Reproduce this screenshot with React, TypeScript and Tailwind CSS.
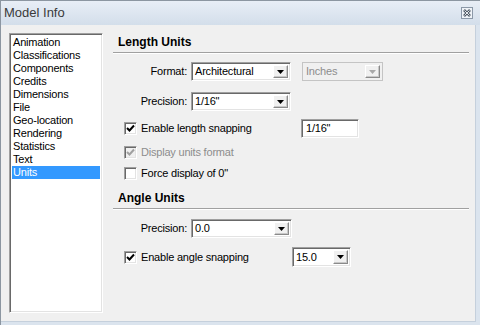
const sunken =
  'border border-t-[#a0a0a0] border-l-[#a0a0a0] border-r-white border-b-white shadow-[inset_1px_1px_0_#696969,inset_-1px_-1px_0_#e3e3e3]'

const ITEMS = [
  'Animation',
  'Classifications',
  'Components',
  'Credits',
  'Dimensions',
  'File',
  'Geo-location',
  'Rendering',
  'Statistics',
  'Text',
  'Units',
]

function ArrowButton({ disabled }: { disabled?: boolean }) {
  return (
    <div className="w-[15px] h-full flex items-center justify-center bg-[#f0f0f0] border border-t-white border-l-white border-r-[#8a8a8a] border-b-[#8a8a8a] shadow-[inset_-1px_-1px_0_#c8c8c8]">
      <svg width="7" height="4" viewBox="0 0 7 4">
        <path d="M0 0h7L3.5 4z" fill={disabled ? '#a8a8a8' : '#000'} />
      </svg>
    </div>
  )
}

function Select({
  value,
  width,
  height = 19,
  disabled,
}: {
  value: string
  width: string
  height?: number
  disabled?: boolean
}) {
  return (
    <div
      className={`${width} flex items-stretch p-[2px] ${
        disabled ? 'border border-[#c4c4c4] bg-[#f0f0f0] text-[#8d8d8d]' : `${sunken} bg-white text-black`
      }`}
      style={{ height }}
    >
      <div className="flex-1 flex items-center pl-[1px] overflow-hidden whitespace-nowrap">{value}</div>
      <ArrowButton disabled={disabled} />
    </div>
  )
}

function Checkbox({ checked, disabled }: { checked?: boolean; disabled?: boolean }) {
  return (
    <div
      className={`w-[13px] h-[13px] shrink-0 flex items-center justify-center ${sunken} ${
        disabled ? 'bg-[#f0f0f0]' : 'bg-white'
      }`}
    >
      {checked && (
        <svg width="9" height="9" viewBox="0 0 9 9">
          <path
            d="M1 4 L3.5 6.5 L8 1.5"
            fill="none"
            stroke={disabled ? '#a0a0a0' : '#000'}
            strokeWidth="2"
          />
        </svg>
      )}
    </div>
  )
}

function CloseButton() {
  return (
    <div className="w-[12px] h-[12px] border border-[#8b98a8] bg-[#eef2f7] flex items-center justify-center">
      <svg width="8" height="8" viewBox="0 0 8 8">
        <path d="M1 1 L7 7 M7 1 L1 7" stroke="#4f5a66" strokeWidth="2.6" />
        <path d="M1.5 1.5 L6.5 6.5 M6.5 1.5 L1.5 6.5" stroke="#f4f6f9" strokeWidth="0.9" />
      </svg>
    </div>
  )
}

function SectionHeading({ children }: { children: string }) {
  return (
    <div>
      <div className="h-[16px] leading-[16px] pl-[5px] text-[12px] font-bold text-black tracking-normal">
        {children}
      </div>
      <div className="mt-[2px] h-[1px] bg-[#a0a0a0] shadow-[0_1px_0_#fff]" />
    </div>
  )
}

export default function App() {
  return (
    <div className="w-[480px] h-[325px] flex flex-col border-l border-t border-[#8c96a1] bg-[#dbe4ee] font-['Liberation_Sans',Arial,sans-serif] text-[11px] tracking-[-0.2px] text-black select-none">
      {/* Title bar */}
      <div className="h-[24px] shrink-0 flex items-center justify-between pl-[3px] pr-[7px] bg-gradient-to-b from-[#e8eef6] to-[#d3deea]">
        <span className="text-[13px] text-[#3a3a3a] tracking-normal">Model Info</span>
        <CloseButton />
      </div>

      {/* Body */}
      <div className="flex-1 flex bg-[#f0f0f0] mr-[4px] mb-[3px] border-r border-b border-[#c5d0dc]">
        {/* List */}
        <div className={`ml-[8px] mt-[8px] w-[94px] h-[280px] bg-white p-[2px] ${sunken}`}>
          {ITEMS.map((item) => (
            <div
              key={item}
              className={`h-[13px] leading-[13px] pl-[1px] whitespace-nowrap ${
                item === 'Units' ? 'bg-[#3399ff] text-white' : ''
              }`}
            >
              {item}
            </div>
          ))}
        </div>

        {/* Settings */}
        <div className="ml-[10px] w-[356px] pt-[9px] flex flex-col">
          <SectionHeading>Length Units</SectionHeading>

          <div className="mt-[9px] flex items-center">
            <div className="w-[74px] text-right">Format:</div>
            <div className="ml-[4px]">
              <Select value="Architectural" width="w-[100px]" />
            </div>
            <div className="ml-[11px]">
              <Select value="Inches" width="w-[81px]" disabled />
            </div>
          </div>

          <div className="mt-[11px] flex items-center">
            <div className="w-[74px] text-right">Precision:</div>
            <div className="ml-[4px]">
              <Select value={'1/16"'} width="w-[100px]" />
            </div>
          </div>

          <div className="mt-[8px] h-[19px] flex items-center pl-[11px]">
            <Checkbox checked />
            <div className="ml-[4px] w-[160px]">Enable length snapping</div>
            <div className={`w-[58px] h-[19px] bg-white flex items-center pl-[4px] ${sunken}`}>1/16"</div>
          </div>

          <div className="mt-[6px] h-[16px] flex items-center pl-[11px]">
            <Checkbox checked disabled />
            <div className="ml-[4px] text-[#8d8d8d]">Display units format</div>
          </div>

          <div className="mt-[5px] h-[16px] flex items-center pl-[11px]">
            <Checkbox />
            <div className="ml-[4px]">Force display of 0"</div>
          </div>

          <div className="mt-[9px]">
            <SectionHeading>Angle Units</SectionHeading>
          </div>

          <div className="mt-[10px] flex items-center">
            <div className="w-[74px] text-right">Precision:</div>
            <div className="ml-[4px]">
              <Select value="0.0" width="w-[101px]" />
            </div>
          </div>

          <div className="mt-[9px] h-[20px] flex items-center pl-[11px]">
            <Checkbox checked />
            <div className="ml-[4px] w-[151px]">Enable angle snapping</div>
            <Select value="15.0" width="w-[59px]" height={20} />
          </div>
        </div>
      </div>
    </div>
  )
}
